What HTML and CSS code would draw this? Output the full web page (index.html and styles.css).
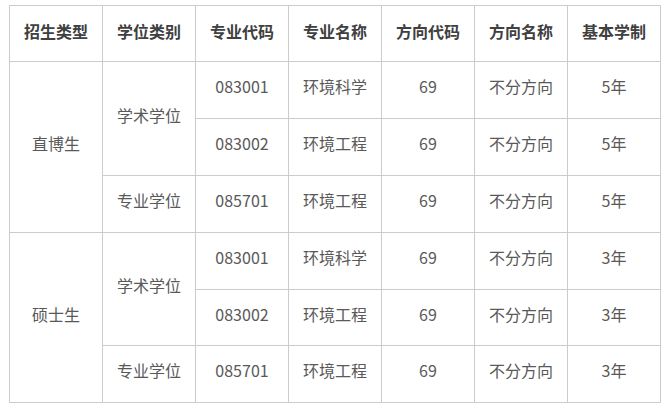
FILE: index.html
```html
<!DOCTYPE html>
<html lang="zh">
<head>
<meta charset="utf-8">
<link rel="stylesheet" href="styles.css">
</head>
<body>
<table class="plan">
  <colgroup>
    <col class="c"><col class="c"><col class="c"><col class="c"><col class="c"><col class="c"><col class="c">
  </colgroup>
  <thead>
    <tr class="head-row">
      <th>招生类型</th><th>学位类别</th><th>专业代码</th><th>专业名称</th><th>方向代码</th><th>方向名称</th><th>基本学制</th>
    </tr>
  </thead>
  <tbody>
    <tr>
      <td rowspan="3">直博生</td>
      <td rowspan="2">学术学位</td>
      <td>083001</td><td>环境科学</td><td>69</td><td>不分方向</td><td>5年</td>
    </tr>
    <tr>
      <td>083002</td><td>环境工程</td><td>69</td><td>不分方向</td><td>5年</td>
    </tr>
    <tr>
      <td>专业学位</td>
      <td>085701</td><td>环境工程</td><td>69</td><td>不分方向</td><td>5年</td>
    </tr>
    <tr>
      <td rowspan="3">硕士生</td>
      <td rowspan="2">学术学位</td>
      <td>083001</td><td>环境科学</td><td>69</td><td>不分方向</td><td>3年</td>
    </tr>
    <tr class="short">
      <td>083002</td><td>环境工程</td><td>69</td><td>不分方向</td><td>3年</td>
    </tr>
    <tr>
      <td>专业学位</td>
      <td>085701</td><td>环境工程</td><td>69</td><td>不分方向</td><td>3年</td>
    </tr>
  </tbody>
</table>
</body>
</html>
```

FILE: styles.css
```css
html, body {
  margin: 0;
  background: #ffffff;
}
body {
  padding: 5px 0 0 9px;
  font-family: "Microsoft YaHei", "Noto Sans CJK SC", "Noto Sans", sans-serif;
}
.plan {
  border-collapse: collapse;
  table-layout: fixed;
  width: 652px;
}
.plan .c {
  width: 93px;
}
.plan th,
.plan td {
  border: 1px solid #cccccc;
  text-align: center;
  vertical-align: middle;
  font-size: 16px;
  line-height: 22px;
  padding: 0 0 6px 0;
}
.plan th {
  font-weight: 600;
  color: #404040;
}
.plan td {
  font-weight: normal;
  color: #595959;
  padding-bottom: 8px;
}
.head-row {
  height: 56px;
}
.plan tbody tr {
  height: 57px;
}
.plan tbody tr.short {
  height: 56px;
}
```
